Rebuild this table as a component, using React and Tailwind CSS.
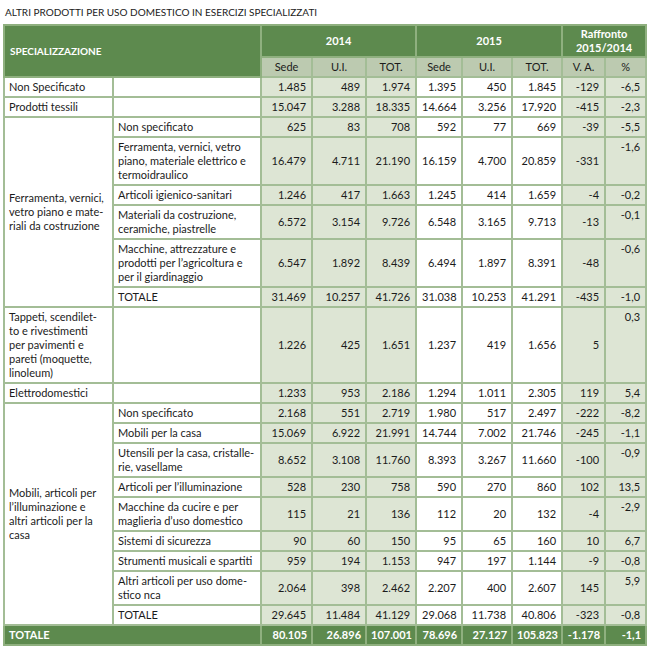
import React from "react";

const rows = [
  { label: "Non Specificato", sub: "", v: ["1.485", "489", "1.974", "1.395", "450", "1.845", "-129", "-6,5"] },
  { label: "Prodotti tessili", sub: "", v: ["15.047", "3.288", "18.335", "14.664", "3.256", "17.920", "-415", "-2,3"] },
  {
    group: ["Ferramenta, vernici,", "vetro piano e mate-", "riali da costruzione"],
    items: [
      { sub: ["Non specificato"], v: ["625", "83", "708", "592", "77", "669", "-39", "-5,5"] },
      { sub: ["Ferramenta, vernici, vetro", "piano, materiale elettrico e", "termoidraulico"], v: ["16.479", "4.711", "21.190", "16.159", "4.700", "20.859", "-331", "-1,6"] },
      { sub: ["Articoli igienico-sanitari"], v: ["1.246", "417", "1.663", "1.245", "414", "1.659", "-4", "-0,2"] },
      { sub: ["Materiali da costruzione,", "ceramiche, piastrelle"], v: ["6.572", "3.154", "9.726", "6.548", "3.165", "9.713", "-13", "-0,1"] },
      { sub: ["Macchine, attrezzature e", "prodotti per l’agricoltura e", "per il giardinaggio"], v: ["6.547", "1.892", "8.439", "6.494", "1.897", "8.391", "-48", "-0,6"] },
      { sub: ["TOTALE"], v: ["31.469", "10.257", "41.726", "31.038", "10.253", "41.291", "-435", "-1,0"] },
    ],
  },
  {
    label: ["Tappeti, scendilet-", "to e rivestimenti", "per pavimenti e", "pareti (moquette,", "linoleum)"],
    sub: "",
    v: ["1.226", "425", "1.651", "1.237", "419", "1.656", "5", "0,3"],
  },
  { label: "Elettrodomestici", sub: "", v: ["1.233", "953", "2.186", "1.294", "1.011", "2.305", "119", "5,4"] },
  {
    group: ["Mobili, articoli per", "l’illuminazione e", "altri articoli per la", "casa"],
    items: [
      { sub: ["Non specificato"], v: ["2.168", "551", "2.719", "1.980", "517", "2.497", "-222", "-8,2"] },
      { sub: ["Mobili per la casa"], v: ["15.069", "6.922", "21.991", "14.744", "7.002", "21.746", "-245", "-1,1"] },
      { sub: ["Utensili per la casa, cristalle-", "rie, vasellame"], v: ["8.652", "3.108", "11.760", "8.393", "3.267", "11.660", "-100", "-0,9"] },
      { sub: ["Articoli per l’illuminazione"], v: ["528", "230", "758", "590", "270", "860", "102", "13,5"] },
      { sub: ["Macchine da cucire e per", "maglieria d’uso domestico"], v: ["115", "21", "136", "112", "20", "132", "-4", "-2,9"] },
      { sub: ["Sistemi di sicurezza"], v: ["90", "60", "150", "95", "65", "160", "10", "6,7"] },
      { sub: ["Strumenti musicali e spartiti"], v: ["959", "194", "1.153", "947", "197", "1.144", "-9", "-0,8"] },
      { sub: ["Altri articoli per uso dome-", "stico nca"], v: ["2.064", "398", "2.462", "2.207", "400", "2.607", "145", "5,9"] },
      { sub: ["TOTALE"], v: ["29.645", "11.484", "41.129", "29.068", "11.738", "40.806", "-323", "-0,8"] },
    ],
  },
];

const Lines = ({ lines }) => {
  const arr = Array.isArray(lines) ? lines : [lines];
  return arr.map((l, i) => (
    <React.Fragment key={i}>
      {i > 0 && <br />}
      {l}
    </React.Fragment>
  ));
};

const Values = ({ v, multi }) =>
  v.map((n, i) => {
    const shaded = i < 3 || i > 5;
    const top = multi && i === 7;
    return (
      <td
        key={i}
        className={`border-2 border-[#a3bd96] px-[5px] py-[2px] text-right whitespace-nowrap ${
          top ? "align-top" : "align-middle"
        } ${shaded ? "bg-[#dde5d4]" : "bg-white"}`}
      >
        {n}
      </td>
    );
  });

const txt = "border-2 border-[#a3bd96] bg-white pl-[4px] pr-[2px] py-[2px] text-left align-middle whitespace-nowrap";

export default function App() {
  return (
    <div className="bg-white w-[649px] h-[652px] font-['Lato','Liberation_Sans',sans-serif] text-[11px] leading-[14px] text-[#1b1b1b]">
      <div className="pt-[5px] pl-[5px] pb-[5px] text-[10px] leading-[14px] text-[#222]">
        ALTRI PRODOTTI PER USO DOMESTICO IN ESERCIZI SPECIALIZZATI
      </div>
      <table className="ml-[3px] w-[642px] table-fixed border-collapse border-2 border-[#8fb07f]">
        <colgroup>
          <col className="w-[109px]" />
          <col className="w-[148px]" />
          <col className="w-[51px]" />
          <col className="w-[54px]" />
          <col className="w-[50px]" />
          <col className="w-[46px]" />
          <col className="w-[50px]" />
          <col className="w-[50px]" />
          <col className="w-[43px]" />
          <col className="w-[41px]" />
        </colgroup>
        <thead>
          <tr className="bg-[#5d8a4e] text-white font-bold">
            <th colSpan={2} rowSpan={2} className="border-2 border-[#8fb07f] px-[5px] text-left align-middle text-[10px]">
              SPECIALIZZAZIONE
            </th>
            <th colSpan={3} className="border-2 border-[#8fb07f] py-[1px] text-center">2014</th>
            <th colSpan={3} className="border-2 border-[#8fb07f] py-[1px] text-center">2015</th>
            <th colSpan={2} className="border-2 border-[#8fb07f] py-[1px] text-center">
              Raffronto
              <br />
              2015/2014
            </th>
          </tr>
          <tr className="bg-[#bccab0] font-normal">
            {["Sede", "U.I.", "TOT.", "Sede", "U.I.", "TOT.", "V. A.", "%"].map((h, i) => (
              <th key={i} className="border-2 border-[#a3bd96] py-[2px] text-center font-normal">
                {h}
              </th>
            ))}
          </tr>
        </thead>
        <tbody>
          {rows.map((r, ri) =>
            r.group ? (
              r.items.map((it, ii) => (
                <tr key={`${ri}-${ii}`}>
                  {ii === 0 && (
                    <td rowSpan={r.items.length} className={txt}>
                      <Lines lines={r.group} />
                    </td>
                  )}
                  <td className={txt}>
                    <Lines lines={it.sub} />
                  </td>
                  <Values v={it.v} multi={it.sub.length > 1} />
                </tr>
              ))
            ) : (
              <tr key={ri}>
                <td className={txt}>
                  <Lines lines={r.label} />
                </td>
                <td className={txt}></td>
                <Values v={r.v} multi={Array.isArray(r.label)} />
              </tr>
            )
          )}
          <tr className="bg-[#5d8a4e] text-white font-bold">
            <td colSpan={2} className="border-2 border-[#8fb07f] px-[4px] py-[2px] text-left">
              TOTALE
            </td>
            {["80.105", "26.896", "107.001", "78.696", "27.127", "105.823", "-1.178", "-1,1"].map((n, i) => (
              <td key={i} className="border-2 border-[#8fb07f] px-[4px] py-[2px] text-right whitespace-nowrap">
                {n}
              </td>
            ))}
          </tr>
        </tbody>
      </table>
    </div>
  );
}
